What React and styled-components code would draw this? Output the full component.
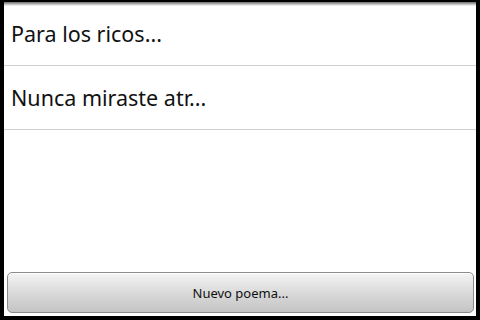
import React from "react";
import styled, { createGlobalStyle } from "styled-components";

const GlobalStyle = createGlobalStyle`
  html, body {
    margin: 0;
    padding: 0;
    background: #000;
  }
`;

const Screen = styled.div`
  width: 480px;
  height: 320px;
  box-sizing: border-box;
  padding: 2px 4px 4px 4px;
  background: #000;
  display: flex;
`;

const Panel = styled.div`
  flex: 1;
  display: flex;
  flex-direction: column;
  background: #fff;
  position: relative;
  font-family: "Noto Sans", "Open Sans", sans-serif;
`;

const TopShadow = styled.div`
  position: absolute;
  top: 0;
  left: 0;
  right: 0;
  height: 4px;
  background: linear-gradient(#6a6a6a, rgba(255, 255, 255, 0));
`;

const List = styled.div`
  flex: 1;
  display: flex;
  flex-direction: column;
`;

const Row = styled.div`
  height: 63px;
  display: flex;
  align-items: center;
  padding-left: 7px;
  border-bottom: 1px solid #cfcfcf;
  font-size: 21.5px;
  color: #111;
`;

const Footer = styled.div`
  padding: 0 2px 3px 3px;
`;

const Button = styled.button`
  width: 100%;
  height: 41px;
  box-sizing: border-box;
  border: 1px solid #8c8c8c;
  border-radius: 5px;
  background: linear-gradient(#f4f4f4, #d8d8d8 55%, #c4c4c4);
  font-family: "Noto Sans", "Open Sans", sans-serif;
  font-size: 13px;
  color: #111;
  padding: 0;
  box-shadow: inset 0 1px 0 #fff;
`;

const poems = ["Para los ricos...", "Nunca miraste atr..."];

export default function App() {
  return (
    <>
      <GlobalStyle />
      <Screen>
        <Panel>
          <TopShadow />
          <List>
            {poems.map((p) => (
              <Row key={p}>{p}</Row>
            ))}
          </List>
          <Footer>
            <Button>Nuevo poema...</Button>
          </Footer>
        </Panel>
      </Screen>
    </>
  );
}
